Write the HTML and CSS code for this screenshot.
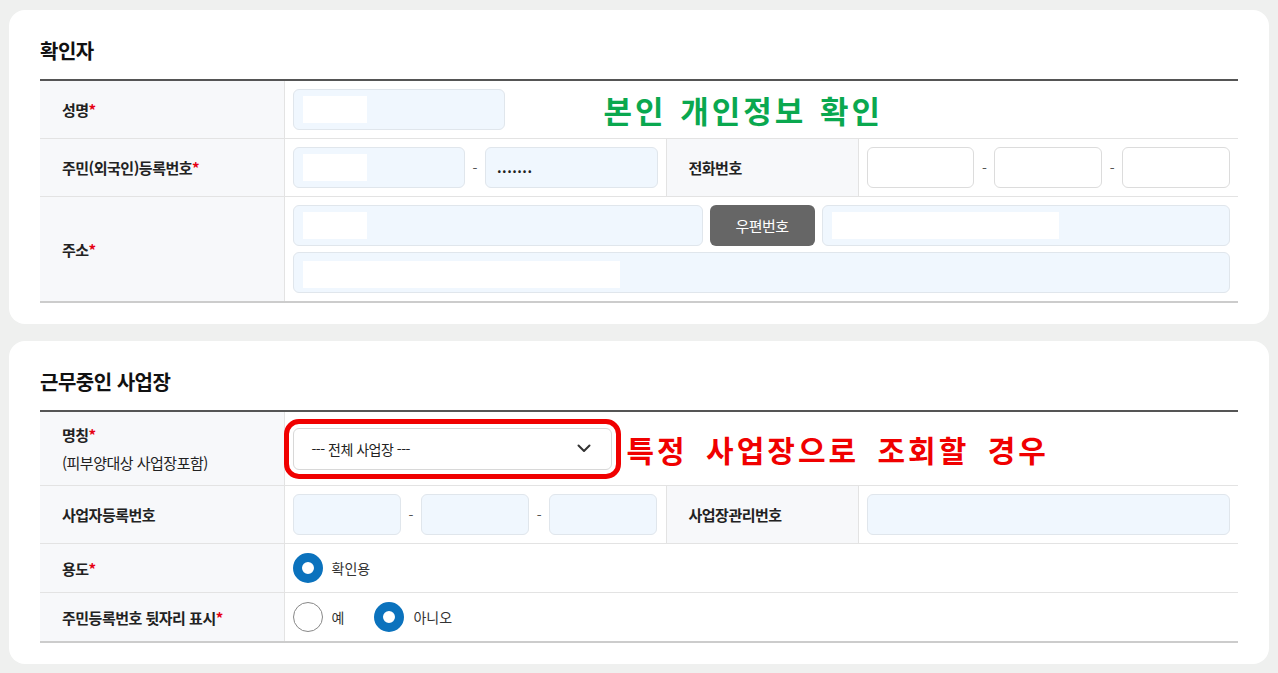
FILE: index.html
```
<!DOCTYPE html>
<html lang="ko">
<head>
  <meta charset="UTF-8">
  <link rel="stylesheet" href="styles.css">
</head>
<body>
  <div class="card">
    <h2 class="card-title">확인자</h2>
    <table class="form-table">
      <colgroup>
        <col class="col-label">
        <col class="col-main">
        <col class="col-label2">
        <col>
      </colgroup>
      <tr>
        <th>성명<span class="req">*</span></th>
        <td colspan="3">
          <div class="line">
            <div class="field name-field"><span class="mask"></span></div>
            <span class="note note-green">본인 개인정보 확인</span>
          </div>
        </td>
      </tr>
      <tr>
        <th>주민(외국인)등록번호<span class="req">*</span></th>
        <td>
          <div class="line">
            <div class="field"><span class="mask"></span></div>
            <span class="dash">-</span>
            <div class="field"><span class="dots">.......</span></div>
          </div>
        </td>
        <th>전화번호</th>
        <td>
          <div class="line">
            <div class="field white"></div>
            <span class="dash">-</span>
            <div class="field white"></div>
            <span class="dash">-</span>
            <div class="field white"></div>
          </div>
        </td>
      </tr>
      <tr>
        <th>주소<span class="req">*</span></th>
        <td colspan="3">
          <div class="line addr">
            <div class="field"><span class="mask"></span></div>
            <button class="btn-zip">우편번호</button>
            <div class="field"><span class="mask wide"></span></div>
          </div>
          <div class="line addr2">
            <div class="field"><span class="mask long"></span></div>
          </div>
        </td>
      </tr>
    </table>
  </div>

  <div class="card">
    <h2 class="card-title">근무중인 사업장</h2>
    <table class="form-table">
      <colgroup>
        <col class="col-label">
        <col class="col-main">
        <col class="col-label2">
        <col>
      </colgroup>
      <tr class="row-tall">
        <th>명칭<span class="req">*</span><span class="sub-label">(피부양대상 사업장포함)</span></th>
        <td colspan="3">
          <div class="line">
            <div class="select-box">
              <span>--- 전체 사업장 ---</span>
              <svg width="14" height="9" viewBox="0 0 14 9"><path d="M1.5 1.5 L7 7 L12.5 1.5" fill="none" stroke="#333" stroke-width="2" stroke-linecap="round" stroke-linejoin="round"/></svg>
            </div>
            <span class="note note-red">특정 사업장으로 조회할 경우</span>
          </div>
        </td>
      </tr>
      <tr>
        <th>사업자등록번호</th>
        <td>
          <div class="line">
            <div class="field"></div>
            <span class="dash">-</span>
            <div class="field"></div>
            <span class="dash">-</span>
            <div class="field"></div>
          </div>
        </td>
        <th>사업장관리번호</th>
        <td>
          <div class="line">
            <div class="field"></div>
          </div>
        </td>
      </tr>
      <tr class="row-radio">
        <th>용도<span class="req">*</span></th>
        <td colspan="3">
          <div class="line">
            <label class="radio"><span class="circle on"></span>확인용</label>
          </div>
        </td>
      </tr>
      <tr class="row-radio">
        <th>주민등록번호 뒷자리 표시<span class="req">*</span></th>
        <td colspan="3">
          <div class="line">
            <label class="radio"><span class="circle"></span>예</label>
            <label class="radio"><span class="circle on"></span>아니오</label>
          </div>
        </td>
      </tr>
    </table>
  </div>
</body>
</html>
```

FILE: styles.css
```
body {
  margin: 0;
  padding: 10px 9px;
  background: #eff0ef;
  font-family: "Noto Sans CJK KR", "Noto Sans", sans-serif;
  color: #222;
}
.card {
  width: 1260px;
  box-sizing: border-box;
  background: white;
  border-radius: 16px;
  padding: 27px 31px 21px 31px;
  margin-bottom: 17px;
}
.card-title {
  margin: 0 0 14px 0;
  font-size: 20px;
  line-height: 28px;
  font-weight: 700;
  letter-spacing: -0.5px;
  color: #111;
}
.form-table {
  width: 1198px;
  table-layout: fixed;
  border-collapse: collapse;
  border-top: 2px solid #555;
  border-bottom: 2px solid #ccc;
}
.col-label {
  width: 244px;
}
.col-main {
  width: 382px;
}
.col-label2 {
  width: 192px;
}
.form-table th {
  background: #f7f8fa;
  text-align: left;
  font-size: 15px;
  font-weight: 700;
  letter-spacing: -0.5px;
  padding: 0 0 0 22px;
  border-bottom: 1px solid #e3e3e3;
  border-right: 1px solid #e3e3e3;
  border-left: 1px solid #e3e3e3;
  color: #222;
}
.form-table tr th:first-child {
  border-left: none;
}
.form-table td {
  padding: 8px;
  border-bottom: 1px solid #e3e3e3;
  vertical-align: middle;
}
.req {
  color: #e60012;
}
.sub-label {
  display: block;
  font-weight: 400;
  margin-top: 6px;
  font-size: 15px;
}
.line {
  display: flex;
  align-items: center;
}
.field {
  flex: 1;
  height: 41px;
  box-sizing: border-box;
  background: #f0f7fe;
  border: 1px solid #e0e6ec;
  border-radius: 6px;
  padding: 6px 9px;
}
.field.white {
  background: white;
  border-color: #dcdcdc;
}
.name-field {
  flex: 0 0 212px;
}
.mask {
  display: block;
  width: 64px;
  height: 27px;
  background: white;
}
.mask.wide {
  width: 227px;
}
.mask.long {
  width: 317px;
  margin-top: 2px;
}
.dots {
  display: block;
  font-size: 14px;
  font-weight: 700;
  line-height: 27px;
  letter-spacing: 0.5px;
  padding-left: 2px;
}
.dash {
  width: 20px;
  text-align: center;
  font-size: 14px;
  color: #555;
}
.note {
  font-weight: 700;
  white-space: nowrap;
  line-height: 1;
}
.note-green {
  color: #0aa84f;
  font-size: 31px;
  margin-left: 99px;
  letter-spacing: 3px;
  word-spacing: 2px;
}
.note-red {
  color: #f00000;
  font-size: 30px;
  margin-left: 15px;
  letter-spacing: 3px;
  word-spacing: 7px;
}
.addr {
  gap: 7px;
}
.addr .field:first-child {
  flex: 0 0 410px;
}
.addr2 {
  margin-top: 6px;
}
.btn-zip {
  width: 105px;
  height: 41px;
  border: none;
  border-radius: 6px;
  background: #666;
  color: white;
  font-family: inherit;
  font-size: 15px;
  letter-spacing: -0.5px;
}
.row-tall th {
  height: 73px;
  padding-top: 0;
  padding-bottom: 0;
  line-height: 22px;
}
.row-tall td {
  padding-top: 0;
  padding-bottom: 0;
}
.select-box {
  width: 319px;
  height: 42px;
  box-sizing: border-box;
  display: flex;
  align-items: center;
  justify-content: space-between;
  padding: 0 20px 0 18px;
  border: 1px solid #d8d8d8;
  border-radius: 6px;
  background: white;
  font-size: 14px;
  letter-spacing: -0.5px;
  outline: 5px solid #f00000;
  outline-offset: 4px;
}
.row-radio td {
  padding-top: 9px;
  padding-bottom: 9px;
}
.radio {
  display: flex;
  align-items: center;
  gap: 9px;
  font-size: 14px;
  color: #333;
  margin-right: 30px;
}
.circle {
  width: 30px;
  height: 30px;
  box-sizing: border-box;
  border: 1px solid #888;
  border-radius: 50%;
  background: white;
}
.circle.on {
  border: 9px solid #0b72bd;
}
```
